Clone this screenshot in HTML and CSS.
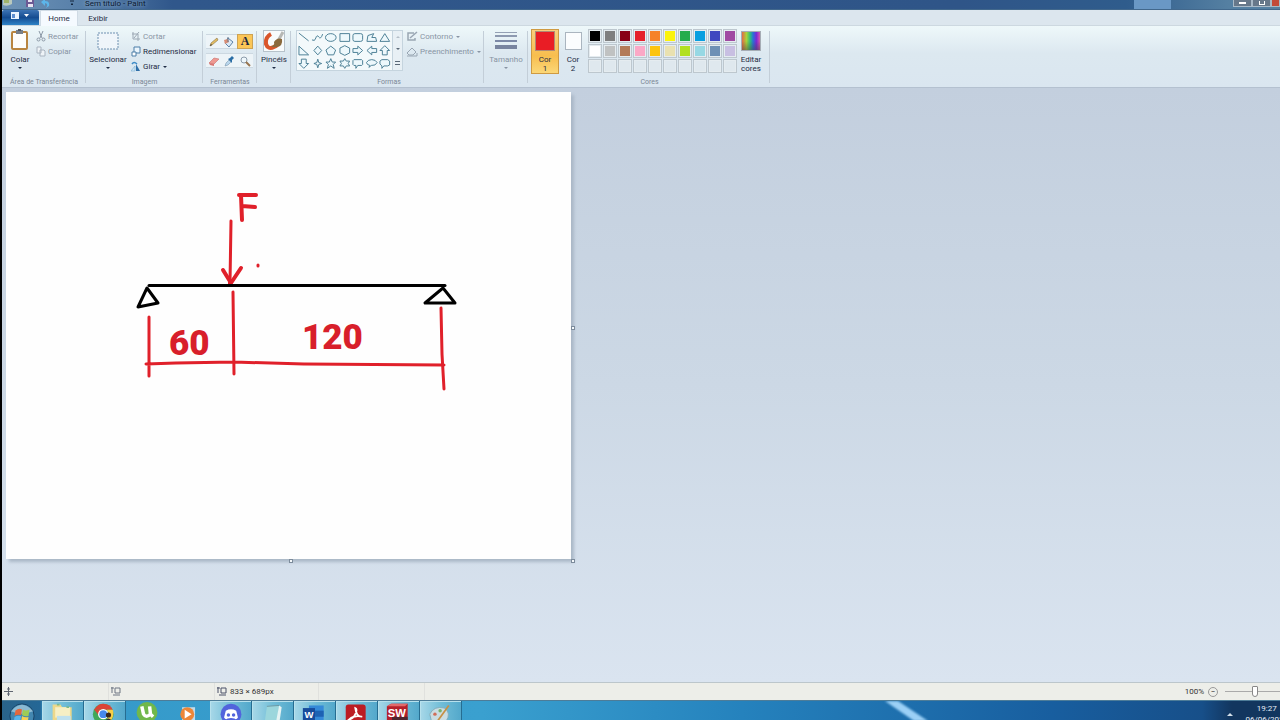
FILE: index.html
```
<!DOCTYPE html>
<html lang="pt-BR">
<head>
<meta charset="utf-8">
<title>Sem título - Paint</title>
<link rel="stylesheet" href="styles.css">
</head>
<body>
<header class="titlebar">
  <svg class="quick" viewBox="0 0 80 10" aria-hidden="true">
    <path d="M1 0h9v4q-5 3-9 1z" fill="#b9c9bd"/><path d="M2 0h5v3H2z" fill="#9fb36b"/>
    <path d="M24 0h8v7h-8z" fill="#6c5a94"/><path d="M26 0h4v2h-4zM26 4h5v3h-5z" fill="#e9e4f2"/>
    <path d="M39 2l4-3v2q5 0 4 5l-3 2q3-4-1-5v3z" fill="#5cb5ea"/>
    <path d="M68 1h4M69 4h2l-1 1z" stroke="#14263f" fill="#14263f"/>
  </svg>
  <span class="title">Sem título - Paint</span>
  <span class="glass"></span>
  <div class="winbtns">
    <button aria-label="Minimizar"><i class="min"></i></button>
    <button aria-label="Restaurar"><i class="max"></i></button>
    <button class="close" aria-label="Fechar"></button>
  </div>
</header>

<nav class="tabs">
  <button class="filemenu" aria-label="Menu Paint">
    <svg width="22" height="10" viewBox="0 0 22 10"><path d="M1 1h8v7H1z" fill="#eaf4ff"/><path d="M2 3h3v4H2z" fill="#5e8fd0"/><path d="M14 3h5l-2.500 3z" fill="#fff"/></svg>
  </button>
  <button class="tab active">Home</button>
  <button class="tab">Exibir</button>
</nav>

<section class="ribbon">
  <div class="group clip">
    <div class="tools">
      <button class="big">
        <svg width="20" height="22" viewBox="0 0 20 22"><rect x="2" y="3" width="15" height="17" rx="1" fill="#fdfdfb" stroke="#b9853f" stroke-width="2"/><path d="M6 1h7v4H6z" fill="#77808a"/><path d="M8 0h3v2H8z" fill="#4d5660"/></svg>
        <span>Colar</span><i class="caret"></i>
      </button>
      <div class="stack">
        <button class="row off"><svg width="10" height="11" viewBox="0 0 10 11"><path d="M3 0l3 7M7 0L4 7" stroke="#8b98a6" fill="none"/><circle cx="2.500" cy="8.500" r="1.500" fill="none" stroke="#8b98a6"/><circle cx="7.500" cy="8.500" r="1.500" fill="none" stroke="#8b98a6"/></svg>Recortar</button>
        <button class="row off"><svg width="10" height="11" viewBox="0 0 10 11"><path d="M1 1h4v6H1zM4 4h4l1 1v5H4z" stroke="#a9b4c0" fill="#eef3f7"/></svg>Copiar</button>
      </div>
    </div>
    <h2>Área de Transferência</h2>
  </div>

  <div class="group image">
    <div class="tools">
      <button class="big">
        <svg width="24" height="22" viewBox="0 0 24 22"><rect x="2" y="4" width="20" height="16" fill="#eff5fa" stroke="#6f90b0" stroke-dasharray="2 1"/></svg>
        <span>Selecionar</span><i class="caret"></i>
      </button>
      <div class="stack">
        <button class="row off"><svg width="10" height="11" viewBox="0 0 10 11"><path d="M2 1v7h7M1 3h6v7M3 7l5-6" stroke="#9ca8b4" fill="none"/></svg>Cortar</button>
        <button class="row"><svg width="10" height="11" viewBox="0 0 10 11"><path d="M3 1h6v6H3z" fill="#eaf5fd" stroke="#4c7fa8"/><path d="M1 6h4v4H1z" fill="#fff" stroke="#4c7fa8"/></svg>Redimensionar</button>
        <button class="row"><svg width="10" height="11" viewBox="0 0 10 11"><path d="M5 3l4 7H5z" fill="#2f6fa8"/><path d="M4 5v5H0z" fill="#cfe6f5" stroke="#6aa5ce" stroke-width=".5"/><path d="M1 3q2-3 5 0" stroke="#3e8cc7" fill="none" stroke-width="1.500"/></svg>Girar<i class="caret"></i></button>
      </div>
    </div>
    <h2>Imagem</h2>
  </div>

  <div class="group ferr">
    <div class="tools">
      <div class="toolgrid">
        <button aria-label="Lápis"><svg viewBox="0 0 14 14"><path d="M3 11l1-3 6-5 1 2-6 5z" fill="#e3bd62" stroke="#8a7347" stroke-width=".6"/><path d="M3 11l1-2 1 1z" fill="#333"/></svg></button>
        <button aria-label="Preencher"><svg viewBox="0 0 14 14"><path d="M6 3l5 4-4 5-4-4z" fill="#d9e9f6" stroke="#5d82a8"/><path d="M2 5l4-1 1 3-4 2z" fill="#d98d74"/><path d="M6 2v5" stroke="#66788d"/></svg></button>
        <button class="on" aria-label="Texto">A</button>
        <button aria-label="Borracha"><svg viewBox="0 0 14 14"><path d="M2 9l5-5 5 1-5 5z" fill="#ee9992" stroke="#c9706c" stroke-width=".6"/><path d="M2 9l5 1v2l-4-1z" fill="#d97774"/></svg></button>
        <button aria-label="Selecionador de cores"><svg viewBox="0 0 14 14"><path d="M3 12l1-3 3-3 2 2-3 3z" fill="#b9d6ec" stroke="#6d8ba5" stroke-width=".5"/><path d="M6 5l2-1 2-2 2 2-2 2v3z" fill="#2a6ea6"/></svg></button>
        <button aria-label="Lupa"><svg viewBox="0 0 14 14"><circle cx="6" cy="6" r="3" fill="#eef7fc" stroke="#8c9cab"/><path d="M8 8l4 4" stroke="#98744f" stroke-width="2"/></svg></button>
      </div>
    </div>
    <h2>Ferramentas</h2>
  </div>

  <div class="group brush">
    <div class="tools">
      <button class="big">
        <svg width="24" height="24" viewBox="0 0 24 24"><rect x="1.500" y="1.500" width="21" height="21" fill="#f8fbfc" stroke="#b6c2ca"/><path d="M9 5Q3 8 4 15q2 6 8 3 4-2 5-5" stroke="#d9562b" stroke-width="4" fill="none"/><path d="M21 3l-5 9" stroke="#b6b8b5" stroke-width="3"/><path d="M12 13q3-5 8-3 1 7-5 8-5 1-6-1 4 0 3-4z" fill="#8a6a3d"/></svg>
        <span>Pincéis</span><i class="caret"></i>
      </button>
    </div>
  </div>

  <div class="group shapes">
    <div class="tools">
      <div class="gallery">
        <div class="shapegrid">
          <svg viewBox="0 0 14 13"><path d="M2 2l10 8"/></svg>
          <svg viewBox="0 0 14 13"><path d="M1 9q3 2 4-2t3-1 4-3"/></svg>
          <svg viewBox="0 0 14 13"><ellipse cx="7" cy="6.500" rx="5.500" ry="4"/></svg>
          <svg viewBox="0 0 14 13"><path d="M2 2.500h10v8H2z"/></svg>
          <svg viewBox="0 0 14 13"><rect x="2" y="2.500" width="10" height="8" rx="2"/></svg>
          <svg viewBox="0 0 14 13"><path d="M2 10.500l1-6 6-2-2 4h4l1 4z"/></svg>
          <svg viewBox="0 0 14 13"><path d="M2 10.500l5-8 5 8z"/></svg>
          <svg viewBox="0 0 14 13"><path d="M2 2l10 9H2z"/></svg>
          <svg viewBox="0 0 14 13"><path d="M7 2l4 4.500-4 4.500-4-4.500z"/></svg>
          <svg viewBox="0 0 14 13"><path d="M7 2l5 4-2 5H4L2 6z"/></svg>
          <svg viewBox="0 0 14 13"><path d="M7 1.500l5 2.500v5l-5 2.500L2 9V4z"/></svg>
          <svg viewBox="0 0 14 13"><path d="M2 4.500h5V2l5 4.500L7 11V8.500H2z"/></svg>
          <svg viewBox="0 0 14 13"><path d="M12 4.500H7V2L2 6.500 7 11V8.500h5z"/></svg>
          <svg viewBox="0 0 14 13"><path d="M4.500 11V6.500H2l5-5 5 5H9.500V11z"/></svg>
          <svg viewBox="0 0 14 13"><path d="M4.500 2v4.500H2l5 5 5-5H9.500V2z"/></svg>
          <svg viewBox="0 0 14 13"><path d="M7 2l1 3.500 3 1-3 1L7 11 6 7.500l-3-1 3-1z"/></svg>
          <svg viewBox="0 0 14 13"><path d="M7 1.500l1.500 3.500H12L9.500 7.500l1 4L7 9l-3.500 2.500 1-4L2 5h3.500z"/></svg>
          <svg viewBox="0 0 14 13"><path d="M7 1.500L8.500 4H12l-1.500 2.500L12 9H8.500L7 11.500 5.500 9H2l1.500-2.500L2 4h3.500z"/></svg>
          <svg viewBox="0 0 14 13"><path d="M3 2.500h8l1 1v4l-1 1H7l-2 3v-3H3l-1-1v-4z"/></svg>
          <svg viewBox="0 0 14 13"><path d="M4 10.500l1-2Q2 8 1.500 5.500 3 2.500 7 2.500t5.500 3Q11 9 6.500 8.500z"/></svg>
          <svg viewBox="0 0 14 13"><path d="M4 11.500V9L2 7V4l2-1.500h6L12 4v4l-2 1H6z"/></svg>
        </div>
        <div class="scroll"><i class="up"></i><i class="caret"></i><i class="caret more"></i></div>
      </div>
      <div class="stack">
        <button class="row off"><svg width="12" height="11" viewBox="0 0 12 11"><path d="M8 2H2v7h7V7M4 7l7-6" stroke="#99a6b3" fill="none" stroke-width="1.500"/></svg>Contorno<i class="caret"></i></button>
        <button class="row off"><svg width="12" height="11" viewBox="0 0 12 11"><path d="M1 7l5-5 4 4-3 3H3zM1 10h10V7" stroke="#99a6b3" fill="none"/></svg>Preenchimento<i class="caret"></i></button>
      </div>
    </div>
    <h2>Formas</h2>
  </div>

  <div class="group size">
    <div class="tools">
      <button class="big off">
        <svg width="24" height="22" viewBox="0 0 24 22"><path d="M1 3.500h22" stroke="#94a0b4"/><path d="M1 7h22" stroke="#8d99b0" stroke-width="2"/><path d="M1 12h22" stroke="#7b88a6" stroke-width="2"/><path d="M1 18h22" stroke="#78849f" stroke-width="4"/></svg>
        <span>Tamanho</span><i class="caret"></i>
      </button>
    </div>
  </div>

  <div class="group colors">
    <div class="tools">
      <button class="pick selected"><i class="red"></i><span>Cor<br>1</span></button>
      <button class="pick"><i class="white"></i><span>Cor<br>2</span></button>
      <div class="palette">
        <i class="c1"></i><i class="c2"></i><i class="c3"></i><i class="c4"></i><i class="c5"></i><i class="c6"></i><i class="c7"></i><i class="c8"></i><i class="c9"></i><i class="c10"></i>
        <i class="c11"></i><i class="c12"></i><i class="c13"></i><i class="c14"></i><i class="c15"></i><i class="c16"></i><i class="c17"></i><i class="c18"></i><i class="c19"></i><i class="c20"></i>
        <i></i><i></i><i></i><i></i><i></i><i></i><i></i><i></i><i></i><i></i>
      </div>
      <button class="edit"><i class="spectrum"></i><span>Editar<br>cores</span></button>
    </div>
    <h2>Cores</h2>
  </div>
</section>

<main class="workspace">
  <div class="paper">
    <svg class="drawing" viewBox="0 0 565 467" role="img" aria-label="Viga biapoiada com força F">
      <g fill="none" stroke="#e0202a" stroke-width="3" stroke-linecap="round" stroke-linejoin="round">
        <path d="M233 103h17M235 103l1 25M236 114l13 1" stroke-width="4"/>
        <path d="M225 129l-1 62"/><path d="M217 178l8 13 10-15" stroke-width="4"/>
        <path d="M252 173v1"/>
        <path d="M227 200l1 82M143 225v59M140 272l30-1 58-1 70 2 140 1M435 216l1 46 2 35"/>
      </g>
      <g fill="none" stroke="#000" stroke-width="3" stroke-linecap="round" stroke-linejoin="round">
        <path d="M143 193.500h296"/><path d="M141 196l-9 19 20-4z"/><path d="M437 196l-18 15h30z"/>
      </g>
      <path d="M224 187v5" stroke="#e0202a" stroke-width="4"/>
      <text x="163" y="263">60</text>
      <text x="296" y="257">120</text>
    </svg>
    <i class="handle e"></i><i class="handle s"></i><i class="handle se"></i>
  </div>
</main>

<footer class="status">
  <div class="cell pos"><svg width="9" height="9" viewBox="0 0 9 9"><path d="M4.500 0v9M0 4.500h9M3 2h3M3 7h3" stroke="#5f6570" fill="none"/></svg></div>
  <div class="cell sel"><svg width="10" height="9" viewBox="0 0 10 9"><path d="M1 0v6M0 1h3M4 1h5v5H4zM2 8h7" stroke="#6d7482" fill="none"/></svg></div>
  <div class="cell dim"><svg width="10" height="9" viewBox="0 0 10 9"><path d="M1 0v6M0 1h3M4 1h5v5H4zM2 8h7" stroke="#4a5068" fill="none"/></svg>833 × 689px</div>
  <div class="cell file"></div>
  <div class="cell zoom"><label for="zoom">100%</label><button aria-label="Reduzir zoom">−</button><input id="zoom" type="range" value="50"></div>
</footer>

<nav class="taskbar">
  <svg class="streak" viewBox="0 0 60 20" aria-hidden="true"><path d="M6 0h13l30 20H35z" fill="#9bd0f6"/></svg>
  <button class="start" aria-label="Iniciar"><svg viewBox="0 0 30 30"><circle cx="15" cy="15" r="13" fill="#4387b0" stroke="#173f63"/><path d="M3 10q12-14 24 0-12 5-24 0z" fill="#a9cfe1" opacity=".7"/><path d="M8 9q4-3 7-1l-1 6q-4-1-7 1z" fill="#e5673c"/><path d="M16 8q3 2 7 0l-1 7q-4 1-7-1z" fill="#9dcc56"/><path d="M7 16q3-2 7-1l-1 6q-4-1-7 1z" fill="#58b4ec"/><path d="M15 15q3 2 7 1l-1 6q-4 1-7-1z" fill="#f8d152"/></svg></button>
  <button class="open" aria-label="Explorador"><svg viewBox="0 0 30 30"><path d="M3 3h9l2 3h11v22H3z" fill="#ecd88b"/><path d="M6 6h17v12H6z" fill="#f6efc4"/><path d="M8 3h3M19 6h3" stroke="#7cb98c" stroke-width="2"/><path d="M8 16h16v12H8z" fill="#bfe1ee"/></svg></button>
  <button class="open" aria-label="Chrome"><svg viewBox="0 0 30 30"><circle cx="13" cy="14" r="12" fill="#41a858"/><path d="M3 8Q7 2 13 2q8 0 11 7H13z" fill="#dc4437"/><path d="M24 9q3 12-9 17l5-12-3-5z" fill="#f8ce46"/><path d="M2 8l7 9 5-8z" fill="#dc4437"/><circle cx="13" cy="14" r="6" fill="#fff"/><circle cx="13" cy="14" r="4.500" fill="#4689ec"/><circle cx="19" cy="15" r="3" fill="#37281f"/><path d="M13 25q6-12 12 0z" fill="#2d3034"/></svg></button>
  <button aria-label="uTorrent"><svg viewBox="0 0 30 30"><circle cx="15" cy="12" r="12" fill="#70b84b"/><path d="M9 5l2 9q3 5 8 0l-1-9M19 14l3 3" fill="none" stroke="#fff" stroke-width="4"/></svg></button>
  <button aria-label="Player"><svg viewBox="0 0 30 30"><path d="M7 6h15v20H7z" fill="#bfdaea"/><circle cx="13" cy="14" r="8" fill="#ed8638"/><path d="M10 9l8 5-8 5z" fill="#fff"/></svg></button>
  <button class="open" aria-label="Discord"><svg viewBox="0 0 30 30"><circle cx="15" cy="14" r="12" fill="#5264dc"/><path d="M9 10q6-3 12 0l2 8q-2 3-4 1-4-1-8 0-2 2-4-1z" fill="#fff"/><circle cx="12" cy="15" r="2" fill="#5264dc"/><circle cx="18" cy="15" r="2" fill="#5264dc"/></svg></button>
  <button class="open" aria-label="Bloco de notas"><svg viewBox="0 0 30 30"><path d="M8 5l14-1-2 22H5z" fill="#9bd6dc"/><path d="M22 4l3 2-3 20h-4z" fill="#e5f3f3"/><path d="M8 5l14-1" stroke="#6b929c"/></svg></button>
  <button class="open" aria-label="Word"><svg viewBox="0 0 30 30"><path d="M8 4h17v22H8z" fill="#3489d8"/><path d="M8 10h17v7H8z" fill="#1d62b3"/><path d="M1 7h14v14H1z" fill="#174c9c"/><text class="wglyph" x="3" y="18">W</text></svg></button>
  <button class="open" aria-label="Acrobat"><svg viewBox="0 0 30 30"><rect x="2" y="3" width="23" height="26" rx="3" fill="#bc1d23"/><path d="M13 7q3 1 0 7-3 6-7 6 6-5 15-3-7 0-8-10z" fill="none" stroke="#fff" stroke-width="2"/></svg></button>
  <button class="open" aria-label="SolidWorks"><svg viewBox="0 0 30 30"><path d="M1 5l5-3h19v21l-3 3H1z" fill="#b51f2b"/><path d="M1 5l5-3h19l-3 3z" fill="#e2696a"/><path d="M7 17h18v9H7z" fill="#4d2730"/><text class="swglyph" x="2" y="17">SW</text></svg></button>
  <button class="open" aria-label="Paint"><svg viewBox="0 0 30 30"><path d="M2 14Q7 4 19 7q8 6 2 15H4z" fill="#cadde2" stroke="#81a9b6"/><circle cx="8" cy="14" r="2" fill="#d16e58"/><circle cx="14" cy="10" r="2" fill="#77b269"/><path d="M11 22L24 4" stroke="#c69044" stroke-width="2"/></svg></button>
  <div class="tray"><i></i><time>19:27<br>06/06/2022</time></div>
</nav>
</body>
</html>
```
FILE: styles.css
```
* { box-sizing: border-box; }
body {
  margin: 0;
  height: 100vh;
  display: flex;
  flex-direction: column;
  overflow: hidden;
  border-left: 2px solid #000;
  font: 8px/10px Roboto, "Open Sans", sans-serif;
  color: #1f2c44;
  background: #cdd9e6;
}
button { font: inherit; color: inherit; border: 0; padding: 0; background: none; }
i { display: block; font-style: normal; }
h2 { margin: 0; font: inherit; font-size: 7px; line-height: 10px; color: #7b8795; text-align: center; white-space: nowrap; }

.titlebar {
  height: 10px;
  flex: none;
  display: flex;
  align-items: flex-start;
  overflow: hidden;
  background: linear-gradient(90deg, #6e93b6, #577fa9 80px, #30578b 170px, #2f5588 75%, #2f5c8c 88%, #5580a2 96%);
  border-bottom: 1px solid #42688c;
}
.quick { width: 80px; height: 10px; }
.title { margin-left: 3px; line-height: 8px; color: #0b1a33; text-shadow: 0 0 4px #b4cce2; }
.glass { width: 37px; height: 9px; margin-left: auto; background: #6a98c5; }
.winbtns { display: flex; margin-left: 62px; }
.winbtns button { width: 19px; height: 7px; background: #67788a; border: 1px solid #a8b9c7; border-top: 0; }
.winbtns .close { background: #c24a3a; width: 9px; }
.min, .max { width: 7px; height: 2px; margin: 1px auto; background: #fff; }
.max { width: 6px; height: 4px; margin: 0 auto; background: none; border: 1px solid #fff; border-top: 0; }

.tabs { flex: none; height: 16px; display: flex; background: #dce6ee; border-bottom: 1px solid #cdd8e0; }
.filemenu { width: 37px; height: 15px; background: linear-gradient(#3d74b4, #154c91 50%, #2e83c6); border-radius: 2px 2px 0 0; }
.tab { width: 38px; height: 16px; line-height: 18px; }
.tab.active { margin: 0 1px; background: #f5faff; border: 1px solid #d0dbe5; border-bottom: 0; line-height: 16px; }

.ribbon {
  flex: none;
  height: 62px;
  display: flex;
  background: linear-gradient(#eef8fa, #dce8f0 45%, #dae6f0);
  border-bottom: 1px solid #b4c1d0;
}
.group { display: flex; flex-direction: column; justify-content: space-between; padding: 3px 2px 0; position: relative; }
.group::after { content: ""; position: absolute; right: 0; top: 5px; bottom: 4px; width: 1px; background: #c3ced8; }
.tools { display: flex; align-items: flex-start; }
.clip { width: 84px; }
.image { width: 117px; }
.ferr { width: 54px; }
.brush { width: 34px; }
.shapes { width: 193px; padding-left: 5px; }
.size { width: 44px; }
.colors { width: 242px; padding-left: 3px; }
.big { width: 32px; flex: none; display: flex; flex-direction: column; align-items: center; }
.big span { margin-top: 4px; }
.image .big { width: 40px; }
.size .big { width: 40px; }
.brush .big { width: 30px; }
.brush .big span { margin-top: 2px; }
.off { color: #8894a3; }
.caret { width: 0; height: 0; margin-top: 2px; border: 2px solid transparent; border-top-color: currentColor; border-bottom: 0; }
.stack { display: flex; flex-direction: column; }
.row { display: flex; align-items: center; gap: 2px; height: 15px; white-space: nowrap; }
.row .caret { margin-top: 0; margin-left: 1px; }
.image .stack { margin-left: 3px; }
.shapes .stack { margin-left: 3px; }

.toolgrid { display: grid; grid-template-columns: repeat(3, 1fr); row-gap: 4px; width: 47px; margin: 5px 0 0 1px; }
.toolgrid button { height: 15px; background: #edf4f8; border-top: 1px solid #ccd8e1; border-bottom: 1px solid #ccd8e1; display: flex; align-items: center; justify-content: center; }
.toolgrid svg { width: 14px; height: 14px; }
.toolgrid .on { background: #fbc657; border: 1px solid #cda354; font: bold 12px/13px "Liberation Serif", serif; color: #1b2740; }

.gallery { flex: none; display: flex; width: 107px; height: 41px; margin-top: 1px; border: 1px solid #c5d4de; background: #f3f9fb; }
.shapegrid { flex: 1; display: grid; grid-template-columns: repeat(7, 1fr); grid-template-rows: repeat(3, 13px); }
.shapegrid svg { width: 100%; height: 100%; fill: #edf8fc; stroke: #4b7f95; stroke-width: 1; }
.scroll { width: 10px; border-left: 1px solid #c5d4de; background: #e8f0f5; display: flex; flex-direction: column; align-items: center; justify-content: space-around; color: #5a6877; }
.scroll .up { border: 2px solid transparent; border-top: 0; border-bottom-color: #b4bec8; }
.scroll .caret { margin: 0; }
.scroll .more { width: 5px; height: 4px; border: 1px solid #5a6877; border-width: 1px 0; }

.pick { width: 28px; height: 45px; display: flex; flex-direction: column; align-items: center; line-height: 9px; }
.pick i { width: 20px; height: 20px; margin: 2px 0 4px; border: 1px solid #aab5bf; }
.pick.selected { background: linear-gradient(#f9ce7d, #f8be4e 60%, #fbd778); border: 1px solid #cf9a42; }
.pick.selected i { margin-top: 1px; }
.pick .red { background: #e91d25; border-color: #b08a74; }
.pick .white { width: 17px; height: 18px; margin: 3px 0 5px; background: #fbfdfe; }
.palette { display: grid; grid-template-columns: repeat(10, 1fr); gap: 1px; width: 149px; margin: 0 0 0 1px; }
.palette i { height: 14px; border: 1px solid #bdc7ce; background: #dfe8ee; box-shadow: inset 0 0 0 1px #e5ecf0; }
.palette .c1 { background: #000; } .palette .c2 { background: #7f7f7f; }
.palette .c3 { background: #880015; } .palette .c4 { background: #e5202a; }
.palette .c5 { background: #f68228; } .palette .c6 { background: #fbf30c; }
.palette .c7 { background: #24ac4c; } .palette .c8 { background: #089fe0; }
.palette .c9 { background: #3f48c0; } .palette .c10 { background: #a04aa2; }
.palette .c11 { background: #fff; } .palette .c12 { background: #c0c2c2; }
.palette .c13 { background: #b37a57; } .palette .c14 { background: #fba8c6; }
.palette .c15 { background: #fdc40f; } .palette .c16 { background: #e9e1b0; }
.palette .c17 { background: #b2e021; } .palette .c18 { background: #97d8e4; }
.palette .c19 { background: #6e90b5; } .palette .c20 { background: #c8bfe2; }
.edit { width: 28px; display: flex; flex-direction: column; align-items: center; line-height: 9px; }
.spectrum { width: 20px; height: 20px; margin: 2px 0 4px; border: 1px solid #a6adb5; background: linear-gradient(transparent 50%, rgba(70, 70, 70, .5)), linear-gradient(90deg, #e56a46, #a7d23a 25%, #2fbf7c 45%, #2b6fd8 62%, #7a29d6 80%, #d957a8); }

.workspace { flex: 1; min-height: 0; padding: 4px; background: linear-gradient(#c3cfde, #ccd8e5 50%, #dae4f0); }
.paper { position: relative; width: 565px; height: 467px; background: #fefefe; box-shadow: 3px 3px 3px #aab8c7; }
.drawing { display: block; width: 100%; height: 100%; }
.drawing text { font: 900 35px Roboto, "Liberation Sans", sans-serif; fill: #d81f2b; }
.handle { position: absolute; width: 4px; height: 4px; background: #f4f8fb; border: 1px solid #7c8b9b; }
.handle.e { right: -4px; top: 50%; }
.handle.s { left: 50%; bottom: -4px; }
.handle.se { right: -4px; bottom: -4px; }

.status { flex: none; height: 18px; display: flex; background: #edeee9; border-top: 1px solid #bcc6cb; color: #333; }
.cell { display: flex; align-items: center; gap: 3px; border-right: 1px solid #e0e1de; }
.pos { width: 107px; padding-left: 2px; }
.sel { width: 106px; padding-left: 2px; }
.dim { width: 104px; padding-left: 2px; }
.file { width: 106px; }
.zoom { margin-left: auto; border: 0; gap: 4px; }
.zoom button { width: 10px; height: 10px; line-height: 8px; border: 1px solid #999; border-radius: 5px; }
.zoom input { appearance: none; width: 60px; height: 12px; margin: 0 -5px 0 3px; background: linear-gradient(#aaa, #aaa) center / 100% 1px no-repeat; }
.zoom input::-webkit-slider-thumb { appearance: none; width: 6px; height: 11px; border: 1px solid #888; border-radius: 1px 1px 3px 3px; background: #fff; }

.taskbar {
  flex: none;
  height: 20px;
  position: relative;
  display: flex;
  overflow: hidden;
  background: linear-gradient(90deg, #2a6389, #246796 38px, #3599c9 42px, #3aa0cf 480px, #2582bd 740px, #185e9f 1050px, #174f89 1200px, #12365f 1230px);
  border-top: 1px solid #4d7c98;
}
.streak { position: absolute; left: 877px; top: 0; width: 60px; height: 20px; filter: blur(1px); }
.taskbar button { flex: none; width: 42px; height: 40px; padding-top: 1px; display: flex; align-items: flex-start; justify-content: center; }
.taskbar .start { width: 40px; }
.taskbar .open { border-right: 1px solid #266d91; background: linear-gradient(90deg, #a8d8e8, #72bed8 50%, #53a8cb); box-shadow: inset 1px 1px #b7e1ed; }
.taskbar button svg { width: 26px; height: 26px; }
.taskbar .start svg { width: 28px; height: 28px; }
.wglyph { font: bold 11px "Liberation Sans", sans-serif; fill: #fff; }
.swglyph { font: bold 13px "Liberation Sans", sans-serif; fill: #fff; }
.tray { margin-left: auto; display: flex; align-items: flex-start; gap: 12px; color: #e4edf5; text-align: center; margin-right: -8px; line-height: 11px; }
.tray i { margin-top: 12px; border: 3px solid transparent; border-top: 0; border-bottom-color: #d4e1eb; }
.tray time { padding-top: 2px; }
```
